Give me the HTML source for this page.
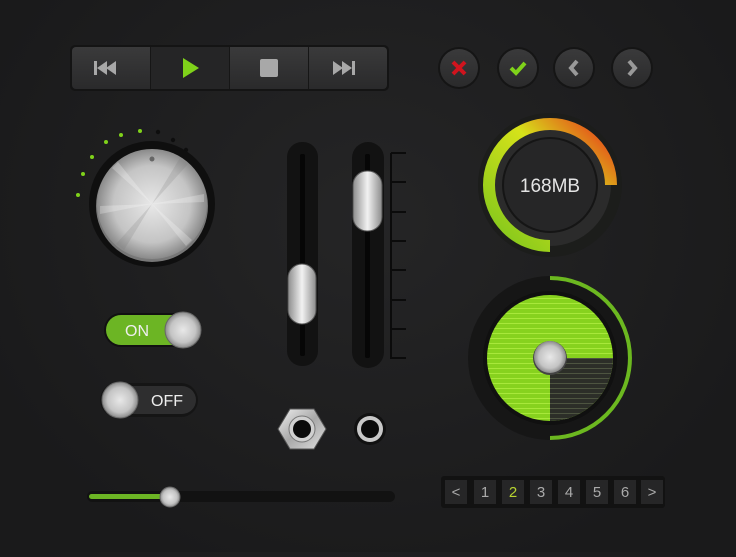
<!DOCTYPE html>
<html><head><style>
body{margin:0;width:736px;height:552px;overflow:hidden;background:radial-gradient(ellipse at 50% 40%,#252526,#1a1a1b 80%);font-family:"Liberation Sans",sans-serif}
</style></head><body>
<svg width="736" height="552" viewBox="0 0 736 552" xmlns="http://www.w3.org/2000/svg">
<defs>
<radialGradient id="met" cx="50%" cy="50%" r="50%">
<stop offset="0" stop-color="#e8e8e8"/><stop offset="0.7" stop-color="#c4c4c4"/><stop offset="1" stop-color="#8a8a8a"/></radialGradient>
<linearGradient id="metl" x1="0" y1="0" x2="1" y2="1"><stop offset="0" stop-color="#f0f0f0"/><stop offset="0.5" stop-color="#a8a8a8"/><stop offset="1" stop-color="#e0e0e0"/></linearGradient>
<linearGradient id="btn" x1="0" y1="0" x2="0" y2="1"><stop offset="0" stop-color="#3a3a3b"/><stop offset="1" stop-color="#2a2a2b"/></linearGradient>
<linearGradient id="gauge" x1="0" y1="1" x2="1" y2="0"><stop offset="0" stop-color="#7ac51c"/><stop offset="0.6" stop-color="#d6e21a"/><stop offset="1" stop-color="#e8301a"/></linearGradient>
<linearGradient id="thumb" x1="0" y1="0" x2="1" y2="0"><stop offset="0" stop-color="#8c8c8c"/><stop offset="0.5" stop-color="#f2f2f2"/><stop offset="1" stop-color="#8c8c8c"/></linearGradient>
<pattern id="stripes" width="6" height="5" patternUnits="userSpaceOnUse"><rect width="6" height="5" fill="#87d21e"/><rect y="3" width="6" height="1" fill="#a8e83a"/></pattern>
<pattern id="dstripes" width="6" height="5" patternUnits="userSpaceOnUse"><rect width="6" height="5" fill="#2c2e28"/><rect y="3" width="6" height="1" fill="#4d5440"/></pattern>
</defs>
<rect x="70" y="45" width="319" height="46" rx="5" fill="#141414"/>
<rect x="72" y="47" width="315" height="42" rx="4" fill="url(#btn)"/>
<rect x="151" y="47" width="78" height="42" fill="#252526"/>
<line x1="150.5" y1="47" x2="150.5" y2="89" stroke="#161616"/>
<line x1="229.5" y1="47" x2="229.5" y2="89" stroke="#161616"/>
<line x1="308.5" y1="47" x2="308.5" y2="89" stroke="#161616"/>
<g fill="#a8a8a8">
<rect x="94" y="61" width="3" height="14"/><path d="M97 68 L107 61 V75Z M106 68 L116 61 V75Z"/>
<rect x="260" y="59" width="18" height="18" rx="2"/>
<path d="M333 61 L343 68 L333 75Z M342 61 L352 68 L342 75Z"/><rect x="352" y="61" width="3" height="14"/>
</g>
<path d="M183 58 L199 68 L183 78Z" fill="#7fd21a"/>
<g>
<circle cx="459" cy="68" r="21" fill="#151515"/><circle cx="459" cy="68" r="19" fill="url(#btn)"/>
<circle cx="518" cy="68" r="21" fill="#151515"/><circle cx="518" cy="68" r="19" fill="url(#btn)"/>
<circle cx="574" cy="68" r="21" fill="#151515"/><circle cx="574" cy="68" r="19" fill="url(#btn)"/>
<circle cx="632" cy="68" r="21" fill="#151515"/><circle cx="632" cy="68" r="19" fill="url(#btn)"/>
<path d="M453 62 L465 74 M465 62 L453 74" stroke="#d0141e" stroke-width="4"/>
<path d="M511 68 L516 73 L525 63" stroke="#7fd21a" stroke-width="4" fill="none"/>
<path d="M577 61 L571 68 L577 75" stroke="#999" stroke-width="4" fill="none"/>
<path d="M629 61 L635 68 L629 75" stroke="#999" stroke-width="4" fill="none"/>
</g>
<g fill="#7fd21a"><circle cx="78" cy="195" r="2"/><circle cx="83" cy="174" r="2"/><circle cx="92" cy="157" r="2"/><circle cx="106" cy="142" r="2"/><circle cx="121" cy="135" r="2"/><circle cx="140" cy="131" r="2"/></g>
<g fill="#0e0e0e"><circle cx="158" cy="132" r="2.2"/><circle cx="173" cy="140" r="2.2"/><circle cx="186" cy="150" r="2.2"/><circle cx="195" cy="163" r="2.2"/><circle cx="201" cy="177" r="2.2"/><circle cx="203" cy="194" r="2.2"/></g>
<circle cx="152" cy="204" r="63" fill="#0f0f0f"/>
<circle cx="152" cy="206" r="56" fill="#777"/>
<circle cx="152" cy="204" r="55" fill="url(#met)"/>
<path d="M152 204 L112 168 L118 162Z M152 204 L192 240 L186 246Z M152 204 L100 214 L100 206Z M152 204 L204 194 L204 202Z" fill="#fff" opacity=".25"/>
<path d="M152 204 L188 164 L180 158Z M152 204 L116 244 L124 250Z" fill="#777" opacity=".2"/>
<circle cx="152" cy="159" r="2.5" fill="#666"/>
<rect x="287" y="142" width="31" height="224" rx="15" fill="#121212"/>
<rect x="300" y="154" width="5" height="202" rx="2" fill="#060606"/>
<rect x="352" y="142" width="32" height="226" rx="16" fill="#121212"/>
<rect x="365" y="154" width="5" height="204" rx="2" fill="#060606"/>
<g stroke="#0b0b0b" stroke-width="2"><line x1="391" y1="153" x2="391" y2="359"/>
<line x1="391" y1="153" x2="406" y2="153"/><line x1="391" y1="182" x2="406" y2="182"/><line x1="391" y1="212" x2="406" y2="212"/><line x1="391" y1="241" x2="406" y2="241"/><line x1="391" y1="270" x2="406" y2="270"/><line x1="391" y1="300" x2="406" y2="300"/><line x1="391" y1="329" x2="406" y2="329"/><line x1="391" y1="358" x2="406" y2="358"/></g>
<rect x="288" y="264" width="28" height="60" rx="14" fill="url(#thumb)" stroke="#555"/>
<rect x="353" y="171" width="29" height="60" rx="14" fill="url(#thumb)" stroke="#555"/>
<circle cx="550" cy="185" r="72" fill="#1c1d1b"/>
<circle cx="550" cy="185" r="61" fill="#2b2b2b"/>
<path d="M550 246 A61 61 0 1 1 611 185" stroke="url(#gauge)" stroke-width="12" fill="none"/>
<circle cx="550" cy="185" r="47" fill="#262627" stroke="#151515" stroke-width="2"/>
<text x="550" y="192" text-anchor="middle" fill="#e4e4e4" font-size="19">168MB</text>
<circle cx="550" cy="358" r="82" fill="#161616"/>
<path d="M550 278 A80 80 0 0 1 550 438" stroke="#6cb820" stroke-width="4" fill="none"/>
<circle cx="550" cy="358" r="67" fill="#101010"/>
<circle cx="550" cy="358" r="63" fill="url(#stripes)"/>
<path d="M550 358 L613 358 A63 63 0 0 1 550 421Z" fill="url(#dstripes)"/>
<circle cx="550" cy="358" r="17" fill="#444"/><circle cx="550" cy="357" r="16" fill="url(#met)"/>
<rect x="104" y="313" width="96" height="34" rx="17" fill="#111"/>
<rect x="106" y="315" width="86" height="30" rx="15" fill="#6cb524"/>
<text x="137" y="336" text-anchor="middle" fill="#eee" font-size="16">ON</text>
<circle cx="183" cy="330" r="18" fill="url(#met)" stroke="#666"/>
<rect x="100" y="383" width="98" height="34" rx="17" fill="#151515"/>
<rect x="104" y="386" width="92" height="28" rx="14" fill="#2e2e2f"/>
<text x="167" y="406" text-anchor="middle" fill="#eee" font-size="16">OFF</text>
<circle cx="120" cy="400" r="18" fill="url(#met)" stroke="#666"/>
<path d="M290 409 L314 409 L326 429 L314 449 L290 449 L278 429Z" fill="url(#metl)" stroke="#555"/>
<circle cx="302" cy="429" r="13" fill="#d0d0d0" stroke="#777"/><circle cx="302" cy="429" r="9" fill="#0a0a0a"/>
<circle cx="370" cy="429" r="16" fill="#111"/><circle cx="370" cy="429" r="13" fill="#c8c8c8"/><circle cx="370" cy="429" r="9" fill="#0a0a0a"/>
<rect x="87" y="491" width="308" height="11" rx="5.5" fill="#121212"/>
<rect x="89" y="494" width="82" height="5" rx="2.5" fill="#6cb524"/>
<circle cx="170" cy="497" r="10" fill="url(#met)" stroke="#666"/>
<rect x="441" y="476" width="224" height="32" rx="3" fill="#121212"/>
<g fill="#262627">
<rect x="445" y="480" width="22" height="24"/><rect x="474" y="480" width="22" height="24"/><rect x="502" y="480" width="22" height="24"/><rect x="530" y="480" width="22" height="24"/><rect x="558" y="480" width="22" height="24"/><rect x="586" y="480" width="22" height="24"/><rect x="614" y="480" width="22" height="24"/><rect x="641" y="480" width="22" height="24"/></g>
<g fill="#aaa" font-size="15" text-anchor="middle">
<text x="456" y="497">&lt;</text><text x="485" y="497">1</text><text x="513" y="497" fill="#b8d430">2</text><text x="541" y="497">3</text><text x="569" y="497">4</text><text x="597" y="497">5</text><text x="625" y="497">6</text><text x="652" y="497">&gt;</text></g>
</svg>
</body></html>
